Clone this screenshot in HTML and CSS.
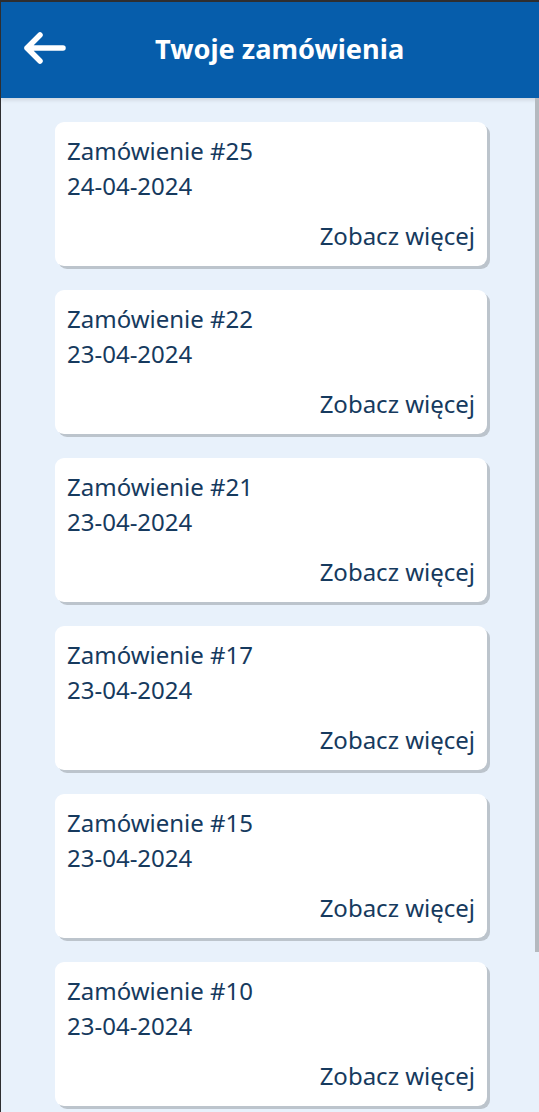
FILE: index.html
```html
<!DOCTYPE html>
<html lang="pl">
<head>
<meta charset="utf-8">
<link rel="stylesheet" href="styles.css">
<title>Twoje zamówienia</title>
</head>
<body>
<div class="frame">
  <header class="topbar">
    <button class="back" aria-label="Wstecz">
      <svg width="44" height="40" viewBox="0 0 44 40"><path d="M4 20 H40 M4 20 L17 7 M4 20 L17 33" fill="none" stroke="#fff" stroke-width="5.5" stroke-linecap="round" stroke-linejoin="round"/></svg>
    </button>
    <h1 class="title">Twoje zamówienia</h1>
  </header>
  <main class="list">
    <div class="card"><div class="num">Zamówienie #25</div><div class="date">24-04-2024</div><div class="more">Zobacz więcej</div></div>
    <div class="card"><div class="num">Zamówienie #22</div><div class="date">23-04-2024</div><div class="more">Zobacz więcej</div></div>
    <div class="card"><div class="num">Zamówienie #21</div><div class="date">23-04-2024</div><div class="more">Zobacz więcej</div></div>
    <div class="card"><div class="num">Zamówienie #17</div><div class="date">23-04-2024</div><div class="more">Zobacz więcej</div></div>
    <div class="card"><div class="num">Zamówienie #15</div><div class="date">23-04-2024</div><div class="more">Zobacz więcej</div></div>
    <div class="card"><div class="num">Zamówienie #10</div><div class="date">23-04-2024</div><div class="more">Zobacz więcej</div></div>
  </main>
  <div class="scrollbar"></div>
</div>
</body>
</html>
```
FILE: styles.css
```css
* { box-sizing: border-box; }
html, body { margin: 0; padding: 0; height: 100%; overflow: hidden; }
body {
  background: #2e2e30;
  font-family: "Noto Sans", "Open Sans", sans-serif;
}
.frame {
  position: relative;
  margin: 2px 0 0 1px;
  height: 1110px;
  background: #e8f1fb;
  overflow: hidden;
}
.topbar {
  height: 96px;
  background: #065dab;
  display: flex;
  align-items: center;
  position: relative;
  box-shadow: 0 2px 4px rgba(0,0,0,0.12);
}
.back {
  background: none;
  border: 0;
  padding: 0;
  margin-left: 22px;
  margin-top: -4px;
  display: flex;
}
.title {
  margin: -3px 0 0 88px;
  color: #fff;
  font-size: 27.2px;
  font-weight: 700;
}
.list {
  display: flex;
  flex-direction: column;
  gap: 24px;
  padding: 24px 0 0 54px;
}
.card {
  width: 432px;
  height: 144px;
  background: #fff;
  border-radius: 9px;
  box-shadow: 3px 3px 0 #bcc4cc;
  padding: 11px 12px 13px 12px;
  display: flex;
  flex-direction: column;
  color: #163a5e;
  font-size: 24px;
  line-height: 35px;
}
.more {
  margin-top: auto;
  text-align: right;
}
.scrollbar {
  position: absolute;
  right: 0;
  top: 96px;
  width: 4px;
  height: 854px;
  background: #b4b9bf;
}
```
